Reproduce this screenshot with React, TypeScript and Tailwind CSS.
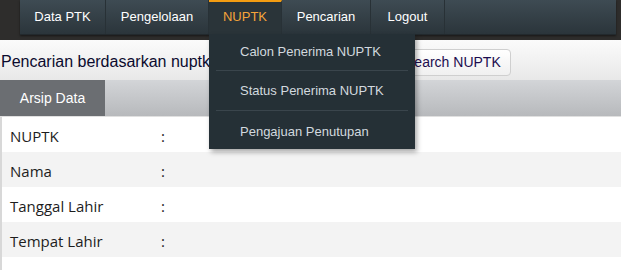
const navItems = ['Data PTK', 'Pengelolaan', 'NUPTK', 'Pencarian', 'Logout'];
const navWidths = ['w-[86px]', 'w-[103px]', 'w-[73px]', 'w-[89px]', 'w-[74px]'];

const dropdown = [
  { label: 'Calon Penerima NUPTK', h: 'h-[37px] border-b border-[#3a454c]' },
  { label: 'Status Penerima NUPTK', h: 'h-[40px] border-b border-[#3a454c] pt-[1px]' },
  { label: 'Pengajuan Penutupan', h: 'h-[38px] pt-[3px]' },
];

const rows = ['NUPTK', 'Nama', 'Tanggal Lahir', 'Tempat Lahir', 'Jenis Kelamin'];

export default function App() {
  return (
    <div className="w-[621px] h-[270px] overflow-hidden bg-white font-['Liberation_Sans',Arial,sans-serif]">
      {/* top bar */}
      <div className="relative h-[40px] bg-[#2e2d2c] pl-[20px] pr-[5px]">
        <nav className="flex h-[35px] bg-gradient-to-b from-[#3e4b53] to-[#2b353b] border-b border-[#22292d] shadow-[0_1px_2px_rgba(0,0,0,0.5)]">
          {navItems.map((item, i) => {
            const active = item === 'NUPTK';
            return (
              <div
                key={item}
                className={`${navWidths[i]} relative flex items-center justify-center text-[13px] border-r border-[#283136] ${
                  active
                    ? 'bg-[#2a3439] text-[#f5a43a] border-t-2 border-t-[#f39c12] pb-[2px]'
                    : 'text-white'
                }`}
              >
                {item}
                {active && (
                  <div className="absolute left-0 top-[32px] z-10 w-[206px] bg-[#253036] px-[7px] shadow-[2px_3px_5px_rgba(0,0,0,0.35)]">
                    {dropdown.map((d) => (
                      <div key={d.label} className={`${d.h} flex items-center pl-[24px] text-[13px] text-[#d2d9df]`}>
                        {d.label}
                      </div>
                    ))}
                  </div>
                )}
              </div>
            );
          })}
        </nav>
      </div>

      {/* search area */}
      <div className="flex items-center h-[40px] bg-gradient-to-b from-[#fbfbfb] to-[#e8e8e8] pl-[1px] pt-[4px]">
        <span className="text-[16px] text-[#0b0b2e] whitespace-nowrap">Pencarian berdasarkan nuptk</span>
        <input className="ml-[6px] w-[175px] h-[26px] border border-[#ccc] bg-white" />
        <button className="ml-[4px] h-[27px] px-[9px] rounded-[4px] border border-[#cfcfcf] bg-gradient-to-b from-white to-[#f0f0f0] text-[14px] text-[#1c0d4f]">
          Search NUPTK
        </button>
      </div>

      {/* tab bar */}
      <div className="flex h-[37px] bg-gradient-to-b from-[#d3d5d8] to-[#b7b9bc] border-b border-[#e0e0e0]">
        <div className="w-[105px] flex items-center justify-center bg-[#6b6e72] text-white text-[14px]">Arsip Data</div>
      </div>

      {/* data table */}
      <div className="border-l-2 border-[#d8d8d8] font-['Open_Sans',sans-serif] text-[15px] text-[#1d1d1d]">
        {rows.map((r, i) => (
          <div key={r} className={`flex items-center h-[35px] pl-[8px] pt-[3px] ${i % 2 === 1 ? 'bg-[#f3f3f3]' : 'bg-white'}`}>
            <span className="w-[151px]">{r}</span>
            <span>:</span>
          </div>
        ))}
      </div>
    </div>
  );
}
